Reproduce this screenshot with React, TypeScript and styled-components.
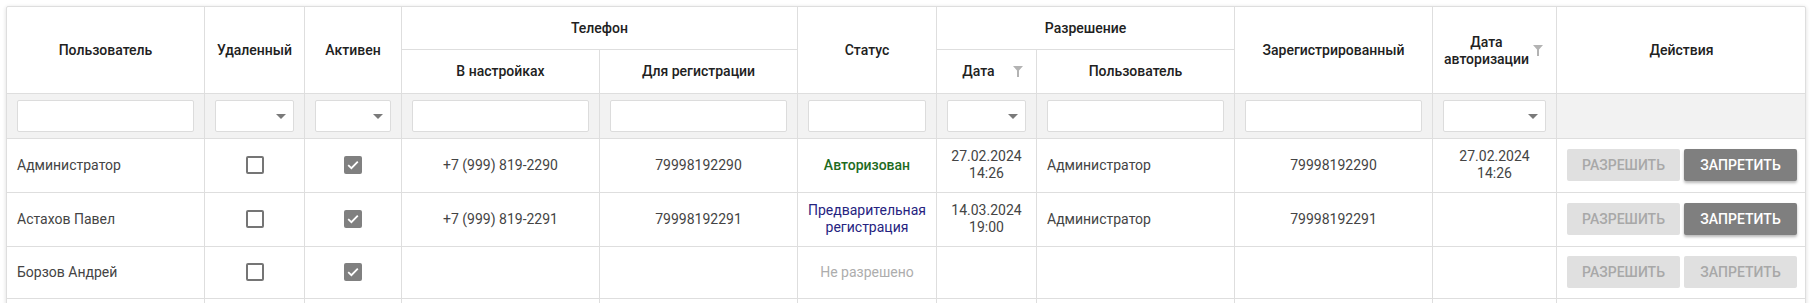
import React from "react";
import styled, { createGlobalStyle, css } from "styled-components";

const GlobalStyle = createGlobalStyle`
  html, body { margin: 0; padding: 0; background: #ffffff; }
  body { font-family: Roboto, "Liberation Sans", Arial, sans-serif; }
  * { box-sizing: border-box; }
`;

const Page = styled.div`
  padding: 6px 8px 0 6px;
`;

const Card = styled.div`
  background: #fff;
  border: 1px solid #dedede;
  border-radius: 2px;
  box-shadow: 0 1px 4px rgba(0, 0, 0, 0.14);
  overflow: hidden;
`;

const Table = styled.table`
  width: 100%;
  border-collapse: separate;
  border-spacing: 0;
  table-layout: fixed;
`;

const Col = styled.col<{ $w: number }>`
  width: ${(p) => p.$w}px;
`;

const cellBorders = css<{ $last?: boolean }>`
  border-bottom: 1px solid #dedede;
  border-right: ${(p) => (p.$last ? "none" : "1px solid #dedede")};
`;

const HeadCell = styled.th<{ $last?: boolean; $sub?: boolean }>`
  ${cellBorders};
  padding: ${(p) => (p.$sub ? "13px 10px 13px" : "13px 10px 12px")};
  font-size: 14px;
  line-height: 17px;
  font-weight: 500;
  color: #212121;
  text-align: center;
  vertical-align: middle;
`;

const HeadInner = styled.div`
  display: flex;
  align-items: center;
  gap: 3px;
`;

const HeadLabel = styled.span`
  flex: 1;
  text-align: center;
`;

const FilterIcon = styled.svg`
  flex: none;
  width: 10px;
  height: 11px;
  margin-right: 3px;
`;

const FilterCell = styled.td<{ $last?: boolean }>`
  ${cellBorders};
  background: #f2f2f2;
  padding: 6px 10px;
  height: 45px;
`;

const TextInput = styled.input`
  display: block;
  width: 100%;
  height: 32px;
  border: 1px solid #dcdcdc;
  border-radius: 2px;
  background: #fff;
  padding: 0 8px;
  font: inherit;
  font-size: 14px;
  outline: none;
`;

const SelectBox = styled.div`
  position: relative;
  width: 100%;
  height: 32px;
  border: 1px solid #dcdcdc;
  border-radius: 2px;
  background: #fff;
`;

const SelectArrow = styled.span`
  position: absolute;
  right: 7px;
  top: 13px;
  width: 0;
  height: 0;
  border-left: 5px solid transparent;
  border-right: 5px solid transparent;
  border-top: 5px solid #7a7a7a;
`;

const Cell = styled.td<{ $last?: boolean; $align?: "left" | "center" }>`
  ${cellBorders};
  padding: 9px 10px 10px;
  font-size: 14px;
  line-height: 17px;
  color: #444;
  text-align: ${(p) => p.$align ?? "center"};
  vertical-align: middle;
`;

const Box = styled.span<{ $checked?: boolean }>`
  display: inline-flex;
  align-items: center;
  justify-content: center;
  width: 18px;
  height: 18px;
  border-radius: 2px;
  vertical-align: middle;
  ${(p) =>
    p.$checked
      ? css`
          background: #808080;
          border: none;
        `
      : css`
          background: #fff;
          border: 2px solid #757575;
        `}
`;

const StatusText = styled.span<{ $tone: "ok" | "pre" | "none" }>`
  color: ${(p) => (p.$tone === "ok" ? "#1e6b1e" : p.$tone === "pre" ? "#26237f" : "#adadad")};
  font-weight: ${(p) => (p.$tone === "ok" ? 500 : 400)};
`;

const Actions = styled.div`
  display: flex;
  gap: 4px;
  margin-right: -1px;
`;

const ActionButton = styled.button<{ $active?: boolean }>`
  flex: 1 1 0;
  height: 32px;
  border: none;
  border-radius: 2px;
  font-family: Roboto, "Liberation Sans", Arial, sans-serif;
  font-size: 14px;
  font-weight: 500;
  letter-spacing: 0;
  text-transform: uppercase;
  padding: 0;
  cursor: pointer;
  ${(p) =>
    p.$active
      ? css`
          background: #7f7f7f;
          color: #fff;
          box-shadow: 0 2px 3px rgba(0, 0, 0, 0.28);
        `
      : css`
          background: #e0e0e0;
          color: #a8a8a8;
        `}
`;

const Checkbox = ({ checked }: { checked?: boolean }) => (
  <Box $checked={checked}>
    {checked && (
      <svg width="12" height="10" viewBox="0 0 12 10">
        <path d="M1.2 5.2 L4.4 8.2 L10.8 1.6" fill="none" stroke="#fff" strokeWidth="1.8" />
      </svg>
    )}
  </Box>
);

const Funnel = () => (
  <FilterIcon viewBox="0 0 10 11">
    <path d="M0 0 H10 L6 4.5 V11 H4 V4.5 Z" fill="#b3b3b3" />
  </FilterIcon>
);

const Select = () => (
  <SelectBox>
    <SelectArrow />
  </SelectBox>
);

type Row = {
  name: string;
  deleted: boolean;
  active: boolean;
  phone: string;
  regPhone: string;
  status: { text: string; tone: "ok" | "pre" | "none" };
  permDate: string[];
  permUser: string;
  registered: string;
  authDate: string[];
  canDeny: boolean;
};

const rows: Row[] = [
  {
    name: "Администратор",
    deleted: false,
    active: true,
    phone: "+7 (999) 819-2290",
    regPhone: "79998192290",
    status: { text: "Авторизован", tone: "ok" },
    permDate: ["27.02.2024", "14:26"],
    permUser: "Администратор",
    registered: "79998192290",
    authDate: ["27.02.2024", "14:26"],
    canDeny: true,
  },
  {
    name: "Астахов Павел",
    deleted: false,
    active: true,
    phone: "+7 (999) 819-2291",
    regPhone: "79998192291",
    status: { text: "Предварительная регистрация", tone: "pre" },
    permDate: ["14.03.2024", "19:00"],
    permUser: "Администратор",
    registered: "79998192291",
    authDate: [],
    canDeny: true,
  },
  {
    name: "Борзов Андрей",
    deleted: false,
    active: true,
    phone: "",
    regPhone: "",
    status: { text: "Не разрешено", tone: "none" },
    permDate: [],
    permUser: "",
    registered: "",
    authDate: [],
    canDeny: false,
  },
  {
    name: "Васильев Игорь",
    deleted: false,
    active: true,
    phone: "",
    regPhone: "",
    status: { text: "Не разрешено", tone: "none" },
    permDate: [],
    permUser: "",
    registered: "",
    authDate: [],
    canDeny: false,
  },
];

const widths = [198, 100, 97, 198, 198, 139, 100, 198, 198, 124, 249];

const Lines = ({ lines }: { lines: string[] }) => (
  <>
    {lines.map((l, i) => (
      <div key={i}>{l}</div>
    ))}
  </>
);

export default function App() {
  return (
    <>
      <GlobalStyle />
      <Page>
        <Card>
          <Table>
            <colgroup>
              {widths.map((w, i) => (
                <Col key={i} $w={w} />
              ))}
            </colgroup>
            <thead>
              <tr>
                <HeadCell rowSpan={2}>Пользователь</HeadCell>
                <HeadCell rowSpan={2}>Удаленный</HeadCell>
                <HeadCell rowSpan={2}>Активен</HeadCell>
                <HeadCell colSpan={2}>Телефон</HeadCell>
                <HeadCell rowSpan={2}>Статус</HeadCell>
                <HeadCell colSpan={2}>Разрешение</HeadCell>
                <HeadCell rowSpan={2}>Зарегистрированный</HeadCell>
                <HeadCell rowSpan={2}>
                  <HeadInner>
                    <HeadLabel>
                      Дата
                      <br />
                      авторизации
                    </HeadLabel>
                    <Funnel />
                  </HeadInner>
                </HeadCell>
                <HeadCell rowSpan={2} $last>
                  Действия
                </HeadCell>
              </tr>
              <tr>
                <HeadCell $sub>В настройках</HeadCell>
                <HeadCell $sub>Для регистрации</HeadCell>
                <HeadCell $sub>
                  <HeadInner>
                    <HeadLabel>Дата</HeadLabel>
                    <Funnel />
                  </HeadInner>
                </HeadCell>
                <HeadCell $sub>Пользователь</HeadCell>
              </tr>
              <tr>
                <FilterCell>
                  <TextInput />
                </FilterCell>
                <FilterCell>
                  <Select />
                </FilterCell>
                <FilterCell>
                  <Select />
                </FilterCell>
                <FilterCell>
                  <TextInput />
                </FilterCell>
                <FilterCell>
                  <TextInput />
                </FilterCell>
                <FilterCell>
                  <TextInput />
                </FilterCell>
                <FilterCell>
                  <Select />
                </FilterCell>
                <FilterCell>
                  <TextInput />
                </FilterCell>
                <FilterCell>
                  <TextInput />
                </FilterCell>
                <FilterCell>
                  <Select />
                </FilterCell>
                <FilterCell $last />
              </tr>
            </thead>
            <tbody>
              {rows.map((r) => (
                <tr key={r.name}>
                  <Cell $align="left">{r.name}</Cell>
                  <Cell>
                    <Checkbox checked={r.deleted} />
                  </Cell>
                  <Cell>
                    <Checkbox checked={r.active} />
                  </Cell>
                  <Cell>{r.phone}</Cell>
                  <Cell>{r.regPhone}</Cell>
                  <Cell>
                    <StatusText $tone={r.status.tone}>{r.status.text}</StatusText>
                  </Cell>
                  <Cell>
                    <Lines lines={r.permDate} />
                  </Cell>
                  <Cell $align="left">{r.permUser}</Cell>
                  <Cell>{r.registered}</Cell>
                  <Cell>
                    <Lines lines={r.authDate} />
                  </Cell>
                  <Cell $last>
                    <Actions>
                      <ActionButton>Разрешить</ActionButton>
                      <ActionButton $active={r.canDeny}>Запретить</ActionButton>
                    </Actions>
                  </Cell>
                </tr>
              ))}
            </tbody>
          </Table>
        </Card>
      </Page>
    </>
  );
}
